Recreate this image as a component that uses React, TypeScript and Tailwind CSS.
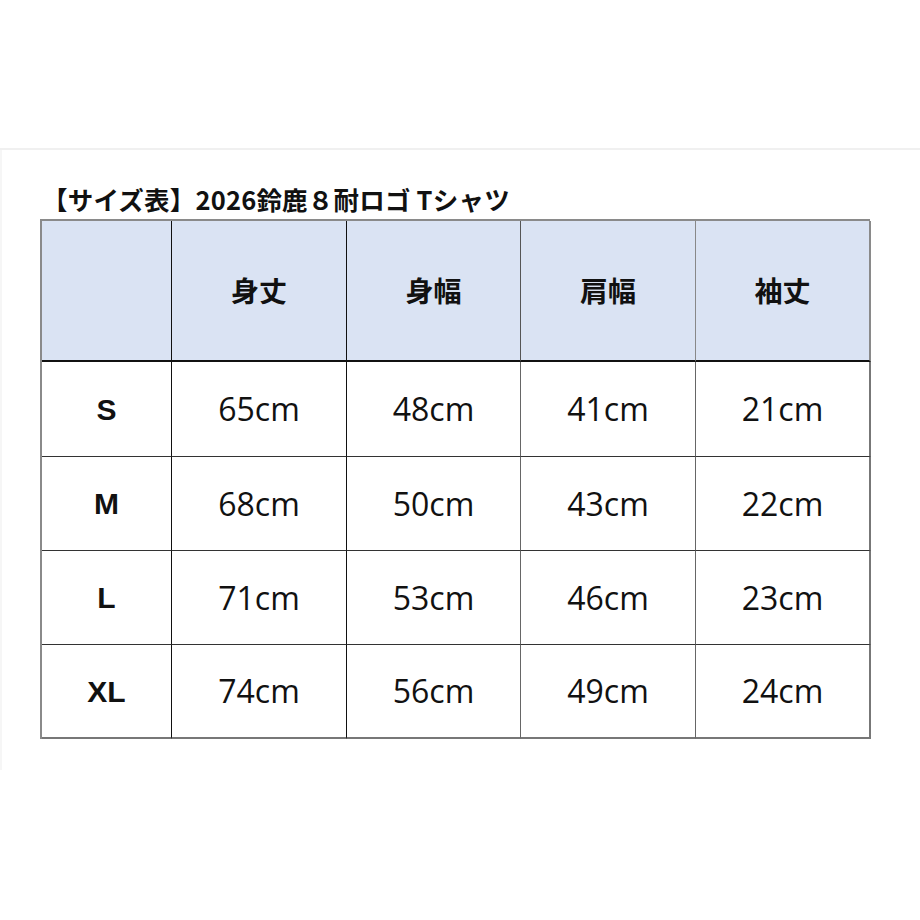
import React from "react";

const heads = ["", "身丈", "身幅", "肩幅", "袖丈"];
const rows = [
  ["S", "65cm", "48cm", "41cm", "21cm"],
  ["M", "68cm", "50cm", "43cm", "22cm"],
  ["L", "71cm", "53cm", "46cm", "23cm"],
  ["XL", "74cm", "56cm", "49cm", "24cm"],
];

const jp = { fontFamily: '"Noto Sans CJK JP", "Noto Sans", sans-serif' };
const num = { fontFamily: '"Open Sans", "Noto Sans", sans-serif' };
const lab = { fontFamily: '"Liberation Sans", Arial, sans-serif' };

export default function App() {
  return (
    <div className="w-[920px] h-[920px] bg-white overflow-hidden">
      <div className="h-[148px]" />
      <div className="h-[2px] bg-[#f0f0f0]" />
      <div className="h-[620px] border-l-2 border-[#f6f6f6] pl-[38px] pt-[34px]">
        <div
          className="h-[30px] leading-[30px] text-[25.5px] font-bold text-[#111] pl-[2px] mb-[5px] tracking-[0.2px]"
          style={jp}
        >
          【サイズ表】2026鈴鹿８耐ロゴ Tシャツ
        </div>
        <div className="grid grid-cols-[130px_175px_174px_175px_175px] w-[830px] border-t-2 border-l-2 border-[#8a8a8a]">
          {heads.map((h, i) => (
            <div
              key={i}
              className={`h-[141px] bg-[#dae3f3] flex items-center justify-center pb-[2px] text-[28px] font-bold text-[#111] border-b-2 border-[#111] ${i === 4 ? "border-r-2 border-r-[#8a8a8a]" : i === 2 ? "border-r border-r-[#555]" : i === 3 ? "border-r border-r-[#888]" : "border-r border-r-[#111]"}`}
              style={jp}
            >
              {h}
            </div>
          ))}
          {rows.map((r, ri) =>
            r.map((c, ci) => (
              <div
                key={`${ri}-${ci}`}
                className={`${ri === 0 ? "h-[95px]" : "h-[94px]"} flex items-center justify-center text-[#111] ${ci === 0 ? "text-[30px] font-bold" : "text-[32px]"} ${ri === 3 ? "border-b-2 border-[#777]" : "border-b border-[#333]"} ${ci === 4 ? "border-r-2 border-r-[#777]" : ci <= 1 ? "border-r border-r-[#111]" : "border-r border-r-[#666]"}`}
                style={ci === 0 ? lab : num}
              >
                {c}
              </div>
            ))
          )}
        </div>
      </div>
    </div>
  );
}
